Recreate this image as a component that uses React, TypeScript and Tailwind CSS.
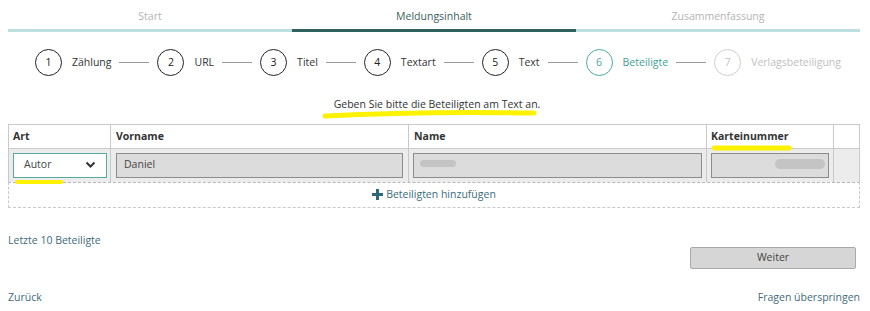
import React from "react";

const font = { fontFamily: '"Open Sans", "Noto Sans", sans-serif' };

function Step({ n, label, state }: { n: number; label: string; state: "done" | "active" | "todo" }) {
  const circle =
    state === "done"
      ? "border-[#222] text-[#222]"
      : state === "active"
      ? "border-[#4aaa9c] text-[#4aaa9c]"
      : "border-[#cfcfcf] text-[#c4c4c4]";
  const text = state === "done" ? "text-[#333]" : state === "active" ? "text-[#3f9f92]" : "text-[#c0c0c0]";
  return (
    <div className="flex items-center">
      <div className={`w-[27px] h-[27px] rounded-full border flex items-center justify-center text-[10.5px] ${circle}`}>{n}</div>
      <span className={`ml-[10px] text-[10.5px] ${text}`}>{label}</span>
    </div>
  );
}

function Line() {
  return <div className="w-[30px] h-px bg-[#9a9a9a] mx-[8px]" />;
}

export default function App() {
  return (
    <div className="relative w-[870px] h-[311px] bg-white text-[#333]" style={font}>
      {/* Tabs */}
      <div className="px-2 pt-[9px]">
        <div className="grid grid-cols-3 w-[852px] text-[10.5px]">
          <div className="text-center text-[#b3b3b3] h-[20px]">Start</div>
          <div className="text-center text-[#3b5e5c] h-[20px]">Meldungsinhalt</div>
          <div className="text-center text-[#b3b3b3] h-[20px]">Zusammenfassung</div>
          <div className="h-[3px] bg-[#bddfdf]" />
          <div className="h-[3px] bg-[#2f615e]" />
          <div className="h-[3px] bg-[#bddfdf]" />
        </div>
      </div>

      {/* Steps */}
      <div className="flex items-center justify-center mt-[17px] ml-[6px]">
        <Step n={1} label="Zählung" state="done" />
        <Line />
        <Step n={2} label="URL" state="done" />
        <Line />
        <Step n={3} label="Titel" state="done" />
        <Line />
        <Step n={4} label="Textart" state="done" />
        <Line />
        <Step n={5} label="Text" state="done" />
        <Line />
        <Step n={6} label="Beteiligte" state="active" />
        <Line />
        <Step n={7} label="Verlagsbeteiligung" state="todo" />
      </div>

      {/* Instruction */}
      <div className="text-center text-[10.5px] text-[#333] mt-[21px] ml-[4px]">Geben Sie bitte die Beteiligten am Text an.</div>

      {/* Table */}
      <div className="mx-2 mt-[11px] w-[852px]">
        <div className="grid grid-cols-[102px_298px_298px_127px_1fr] border border-b-0 border-[#c9c9c9] text-[10.5px]">
          <div className="h-[24px] pt-[2px] px-[4px] flex items-center font-bold text-[#333] border-r border-[#c9c9c9] border-b">Art</div>
          <div className="h-[24px] pt-[2px] px-[5px] flex items-center font-bold text-[#333] border-r border-[#c9c9c9] border-b">Vorname</div>
          <div className="h-[24px] pt-[2px] px-[5px] flex items-center font-bold text-[#333] border-r border-[#c9c9c9] border-b">Name</div>
          <div className="h-[24px] pt-[2px] px-[4px] flex items-center font-bold text-[#333] border-r border-[#c9c9c9] border-b">Karteinummer</div>
          <div className="h-[24px] border-b border-[#c9c9c9]" />

          <div className="h-[33px] bg-[#ececec] border-r border-[#c9c9c9] flex items-center pl-[4px] pr-[2px]">
            <div className="w-[94px] h-[25px] bg-white border border-[#56ab9f] flex items-center justify-between px-[10px]">
              <span className="text-[#444]">Autor</span>
              <svg width="11" height="8" viewBox="0 0 11 8"><path d="M1.5 1.5 L5.5 5.5 L9.5 1.5" fill="none" stroke="#333" strokeWidth="2" /></svg>
            </div>
          </div>
          <div className="h-[33px] bg-[#ececec] border-r border-[#c9c9c9] flex items-center px-[5px]">
            <div className="w-full h-[25px] bg-[#dcdcdc] border border-[#8c8c8c] flex items-center px-[7px] text-[#444]">Daniel</div>
          </div>
          <div className="h-[33px] bg-[#ececec] border-r border-[#c9c9c9] flex items-center px-[4px]">
            <div className="w-full h-[25px] bg-[#dcdcdc] border border-[#8c8c8c] flex items-center px-[6px]">
              <div className="w-[36px] h-[7px] rounded-full bg-[#c4c4c4] -mt-[4px]" />
            </div>
          </div>
          <div className="h-[33px] bg-[#ececec] border-r border-[#c9c9c9] flex items-center px-[4px]">
            <div className="w-full h-[25px] bg-[#dcdcdc] border border-[#8c8c8c] flex items-center justify-end px-[3px]">
              <div className="w-[50px] h-[10px] rounded-full bg-[#c4c4c4] -mt-[3px]" />
            </div>
          </div>
          <div className="h-[33px] bg-[#ececec]" />
        </div>
        <div className="h-[26px] border border-dashed border-[#c9c9c9] border-t-[#b5b5b5] flex items-center justify-center text-[10.5px] text-[#3a6c7a]">
          <svg width="11" height="11" viewBox="0 0 11 11" className="mr-[3px]"><path d="M4 0h3v4h4v3H7v4H4V7H0V4h4z" fill="#2e6779" /></svg>
          Beteiligten hinzufügen
        </div>
      </div>

      {/* Lower links */}
      <div className="px-2 mt-[25px] text-[10.5px] text-[#3f6b7a]">Letzte 10 Beteiligte</div>
      <div className="flex justify-end pr-[14px] mt-[-2px]">
        <button className="w-[166px] h-[22px] bg-[#d6d6d6] border border-[#a9a9a9] rounded-[2px] text-[10.5px] text-[#444]">Weiter</button>
      </div>
      <div className="flex justify-between px-2 mt-[21px] text-[10.5px] text-[#3f6b7a]">
        <span>Zurück</span>
        <span className="mr-[2px]">Fragen überspringen</span>
      </div>

      {/* Yellow annotation strokes */}
      <svg className="absolute left-0 top-0 pointer-events-none" width="870" height="311">
        <path d="M325 116 Q 420 111 534 113" stroke="#fff200" strokeWidth="5" strokeLinecap="round" fill="none" />
        <path d="M17 182 L61 182" stroke="#fff200" strokeWidth="4" strokeLinecap="round" fill="none" />
        <path d="M714 148 L789 148" stroke="#fff200" strokeWidth="5" strokeLinecap="round" fill="none" />
      </svg>
    </div>
  );
}
